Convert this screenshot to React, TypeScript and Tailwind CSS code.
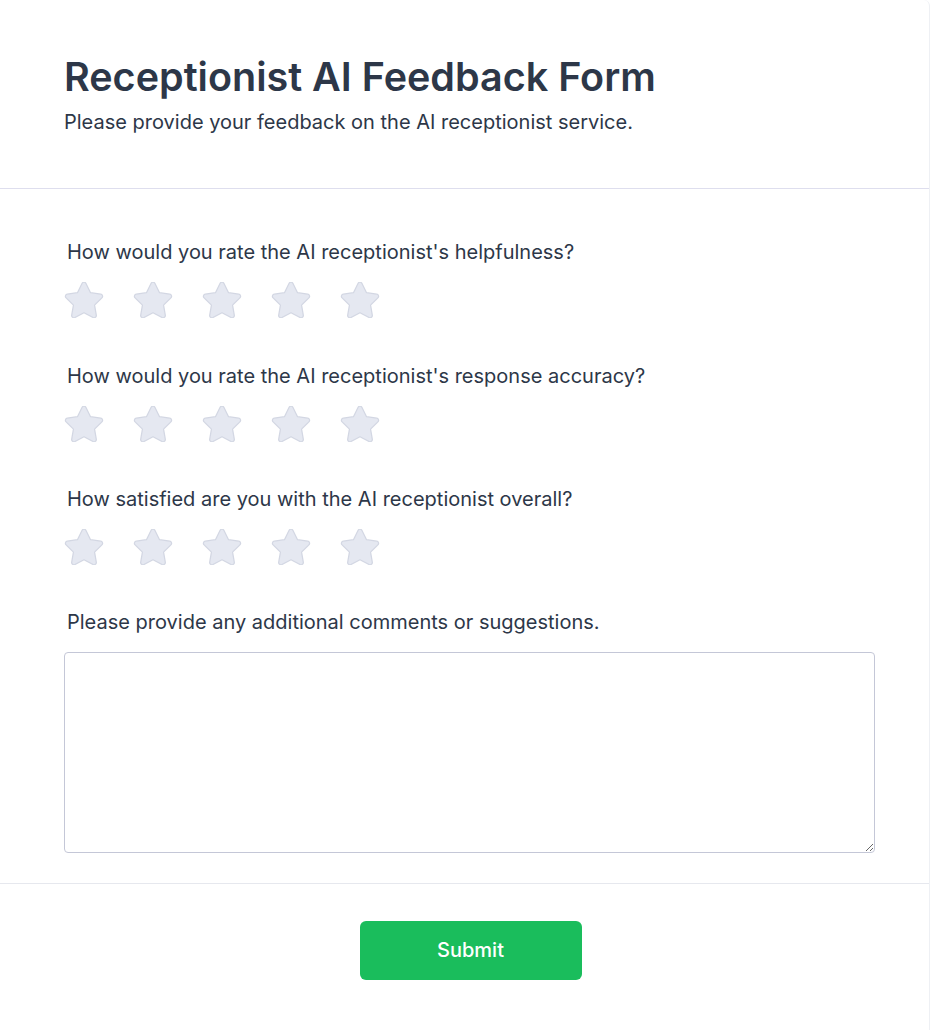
import React, { useState } from 'react';

const questions = [
  "How would you rate the AI receptionist's helpfulness?",
  "How would you rate the AI receptionist's response accuracy?",
  'How satisfied are you with the AI receptionist overall?',
];

function Star({ active }: { active: boolean }) {
  return (
    <svg viewBox="0 0 576 512" className="w-10 h-[36px]">
      <path
        d="M259.3 17.8L194 150.2 47.9 171.5c-26.2 3.8-36.7 36.1-17.7 54.6l105.7 103-25 145.5c-4.5 26.3 23.2 46 46.4 33.7L288 439.6l130.7 68.7c23.2 12.2 50.9-7.4 46.4-33.7l-25-145.5 105.7-103c19-18.5 8.5-50.8-17.7-54.6L382 150.2 316.7 17.8c-11.7-23.6-45.6-23.9-57.4 0z"
        fill={active ? '#facc15' : '#e5e8f1'}
        stroke={active ? '#eab308' : '#d3d7e3'}
        strokeWidth={18}
        strokeLinejoin="round"
      />
    </svg>
  );
}

export default function App() {
  const [ratings, setRatings] = useState<number[]>([0, 0, 0]);
  const [comment, setComment] = useState('');

  return (
    <div
      className="min-h-screen bg-white text-[#2d3748]"
      style={{ fontFamily: 'Inter, "Noto Sans", sans-serif' }}
    >
      <div className="border-r border-[#eef0f4] rounded-tr-md">
        {/* Header */}
        <div className="px-16 pt-[53px] pb-[52px] border-b border-[#dedeee]">
          <h1 className="text-[39.5px] leading-[48px] font-semibold">
            Receptionist AI Feedback Form
          </h1>
          <p className="mt-[7px] text-[20px] leading-7">
            Please provide your feedback on the AI receptionist service.
          </p>
        </div>

        {/* Questions */}
        <div className="pl-16 pr-[54px] pt-[49px] pb-[30px] border-b border-[#e6e8ee]">
          {questions.map((q, qi) => (
            <div key={qi} className="mb-[43.5px]">
              <p className="pl-[3px] text-[20px] leading-7">{q}</p>
              <div className="mt-[16px] flex gap-[29px]">
                {[1, 2, 3, 4, 5].map((n) => (
                  <button
                    key={n}
                    type="button"
                    onClick={() =>
                      setRatings((r) => r.map((v, i) => (i === qi ? n : v)))
                    }
                  >
                    <Star active={ratings[qi] >= n} />
                  </button>
                ))}
              </div>
            </div>
          ))}

          <p className="pl-[3px] -mt-[1px] text-[20px] leading-7">
            Please provide any additional comments or suggestions.
          </p>
          <textarea
            value={comment}
            onChange={(e) => setComment(e.target.value)}
            className="mt-[16px] block w-full h-[201px] border border-[#c4c7d7] rounded-[4px] p-3 text-base outline-none"
          />
        </div>

        {/* Footer */}
        <div className="flex justify-center pl-3 pt-[37px] pb-[50px]">
          <button
            type="button"
            className="w-[222px] h-[59px] rounded-[6px] bg-[#1abd5c] text-white text-[20px] font-medium"
          >
            Submit
          </button>
        </div>
      </div>
    </div>
  );
}
